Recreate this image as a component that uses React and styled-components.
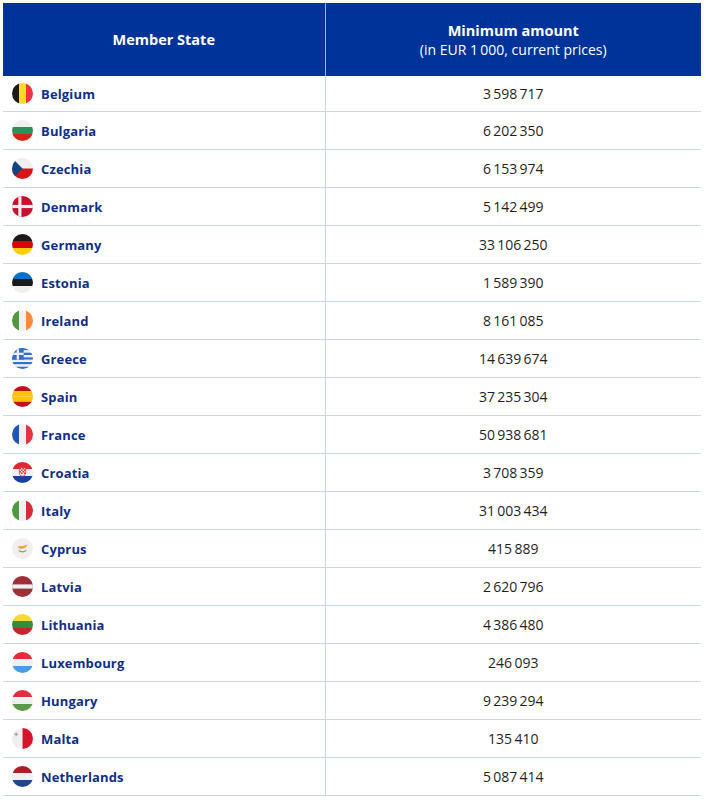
import React from 'react';
import styled, { createGlobalStyle } from 'styled-components';

const GlobalStyle = createGlobalStyle`
  body {
    margin: 0;
    background: #ffffff;
    font-family: "Open Sans", "Noto Sans", Arial, sans-serif;
  }
`;

const Page = styled.div`
  padding: 3px 5px 0 3px;
`;

const Table = styled.table`
  width: 698px;
  border-collapse: collapse;
  table-layout: fixed;
`;

const HeadCell = styled.th`
  background: #003399;
  color: #ffffff;
  height: 73px;
  padding: 0;
  font-size: 14.5px;
  font-weight: 700;
  line-height: 19px;
  text-align: center;
  vertical-align: middle;
  border-left: ${(p) => (p.$divider ? '1px solid #9db3de' : 'none')};
`;

const SubTitle = styled.span`
  display: block;
  font-weight: 400;
  font-size: 14px;
`;

const Row = styled.tr`
  height: ${(p) => (p.$first ? '35.5px' : '38px')};
  border-bottom: 1px solid #c6d5ea;
`;

const NameCell = styled.td`
  padding: 0 0 0 9px;
  vertical-align: middle;
`;

const NameWrap = styled.div`
  display: flex;
  align-items: center;
  gap: 8px;
`;

const CountryName = styled.span`
  color: #0f2f87;
  font-size: 13px;
  font-weight: 700;
  letter-spacing: 0.15px;
`;

const AmountCell = styled.td`
  padding: 0;
  text-align: center;
  vertical-align: middle;
  color: #1f1f1f;
  font-size: 14px;
  border-left: 1px solid #c6d5ea;
`;

const W = '#efefef';

const Stripes = ({ colors, vertical }) => {
  const size = 20 / colors.length;
  return colors.map((c, i) =>
    vertical ? (
      <rect key={i} x={i * size} y="0" width={size + 0.05} height="20" fill={c} />
    ) : (
      <rect key={i} x="0" y={i * size} width="20" height={size + 0.05} fill={c} />
    )
  );
};

const flagArt = {
  BE: <Stripes vertical colors={['#1a1a1a', '#fdda24', '#ef3340']} />,
  BG: <Stripes colors={[W, '#2f8f5b', '#d62612']} />,
  CZ: (
    <>
      <rect width="20" height="10" fill={W} />
      <rect y="10" width="20" height="10" fill="#d7141a" />
      <polygon points="0,0 10,10 0,20" fill="#11457e" />
    </>
  ),
  DK: (
    <>
      <rect width="20" height="20" fill="#c8102e" />
      <rect x="6" width="3" height="20" fill={W} />
      <rect y="8.5" width="20" height="3" fill={W} />
    </>
  ),
  DE: <Stripes colors={['#1a1a1a', '#dd0000', '#ffce00']} />,
  EE: <Stripes colors={['#0072ce', '#1a1a1a', W]} />,
  IE: <Stripes vertical colors={['#4f9a3e', W, '#ff883e']} />,
  GR: (
    <>
      {Array.from({ length: 9 }).map((_, i) => (
        <rect key={i} x="0" y={i * 2.23} width="20" height="2.3" fill={i % 2 ? W : '#2e6fd0'} />
      ))}
      <rect width="11.1" height="11.1" fill="#2e6fd0" />
      <rect x="4.45" width="2.2" height="11.1" fill={W} />
      <rect y="4.45" width="11.1" height="2.2" fill={W} />
    </>
  ),
  ES: <Stripes colors={['#c60b1e', '#ffc400', '#ffc400', '#c60b1e']} />,
  FR: <Stripes vertical colors={['#1f55b5', W, '#e8323f']} />,
  HR: (
    <>
      <Stripes colors={['#e0282e', W, '#1b3f9c']} />
      <path d="M7 5.5 h6 v5 a3 3 0 0 1 -6 0 z" fill={W} stroke="#e0282e" strokeWidth="0.6" />
      {[0, 1, 2, 3].map((r) =>
        [0, 1, 2, 3].map((c) =>
          (r + c) % 2 === 0 ? (
            <rect key={`${r}${c}`} x={7 + c * 1.5} y={5.5 + r * 1.5} width="1.5" height="1.5" fill="#e0282e" />
          ) : null
        )
      )}
    </>
  ),
  IT: <Stripes vertical colors={['#4f9a3e', W, '#d92a38']} />,
  CY: (
    <>
      <rect width="20" height="20" fill={W} />
      <path d="M5.5 8.5 C7 7.5 10 8 12 7.2 C13.5 6.6 14.5 6 15 6.5 C14 8 12.5 10 9.5 10.3 C7.5 10.5 6 9.6 5.5 8.5 z" fill="#e7a73a" />
      <path d="M6.5 12 Q10 14.5 13.5 12" fill="none" stroke="#6aa84f" strokeWidth="1.2" />
    </>
  ),
  LV: (
    <>
      <rect width="20" height="20" fill="#9e3039" />
      <rect y="8" width="20" height="4" fill={W} />
    </>
  ),
  LT: <Stripes colors={['#fdd835', '#2f8f3e', '#c1272d']} />,
  LU: <Stripes colors={['#ed2939', W, '#4a9ce8']} />,
  HU: <Stripes colors={['#e0303f', W, '#5a9a4a']} />,
  MT: (
    <>
      <rect width="10" height="20" fill={W} />
      <rect x="10" width="10" height="20" fill="#d8142b" />
      <path d="M3.4 4.2 h1.2 v1.2 h1.2 v1.2 h-1.2 v1.2 h-1.2 v-1.2 h-1.2 v-1.2 h1.2 z" fill="#a7a7a7" />
    </>
  ),
  NL: <Stripes colors={['#ae1c28', W, '#21468b']} />,
};

const FlagSvg = styled.svg`
  flex: 0 0 auto;
  display: block;
`;

function Flag({ code }) {
  const id = `clip-${code}`;
  return (
    <FlagSvg width="21" height="21" viewBox="0 0 20 20">
      <defs>
        <clipPath id={id}>
          <circle cx="10" cy="10" r="10" />
        </clipPath>
      </defs>
      <g clipPath={`url(#${id})`}>{flagArt[code]}</g>
    </FlagSvg>
  );
}

const NB = '\u2009';
const rows = [
  ['BE', 'Belgium', '3 598 717'],
  ['BG', 'Bulgaria', '6 202 350'],
  ['CZ', 'Czechia', '6 153 974'],
  ['DK', 'Denmark', '5 142 499'],
  ['DE', 'Germany', '33 106 250'],
  ['EE', 'Estonia', '1 589 390'],
  ['IE', 'Ireland', '8 161 085'],
  ['GR', 'Greece', '14 639 674'],
  ['ES', 'Spain', '37 235 304'],
  ['FR', 'France', '50 938 681'],
  ['HR', 'Croatia', '3 708 359'],
  ['IT', 'Italy', '31 003 434'],
  ['CY', 'Cyprus', '415 889'],
  ['LV', 'Latvia', '2 620 796'],
  ['LT', 'Lithuania', '4 386 480'],
  ['LU', 'Luxembourg', '246 093'],
  ['HU', 'Hungary', '9 239 294'],
  ['MT', 'Malta', '135 410'],
  ['NL', 'Netherlands', '5 087 414'],
];

export default function App() {
  return (
    <>
      <GlobalStyle />
      <Page>
        <Table>
          <colgroup>
            <col style={{ width: '322px' }} />
            <col />
          </colgroup>
          <thead>
            <tr>
              <HeadCell>Member State</HeadCell>
              <HeadCell $divider>
                Minimum amount
                <SubTitle>(in EUR 1{NB}000, current prices)</SubTitle>
              </HeadCell>
            </tr>
          </thead>
          <tbody>
            {rows.map(([code, name, amount], i) => (
              <Row key={code} $first={i === 0}>
                <NameCell>
                  <NameWrap>
                    <Flag code={code} />
                    <CountryName>{name}</CountryName>
                  </NameWrap>
                </NameCell>
                <AmountCell>{amount.replace(/ /g, NB)}</AmountCell>
              </Row>
            ))}
          </tbody>
        </Table>
      </Page>
    </>
  );
}
